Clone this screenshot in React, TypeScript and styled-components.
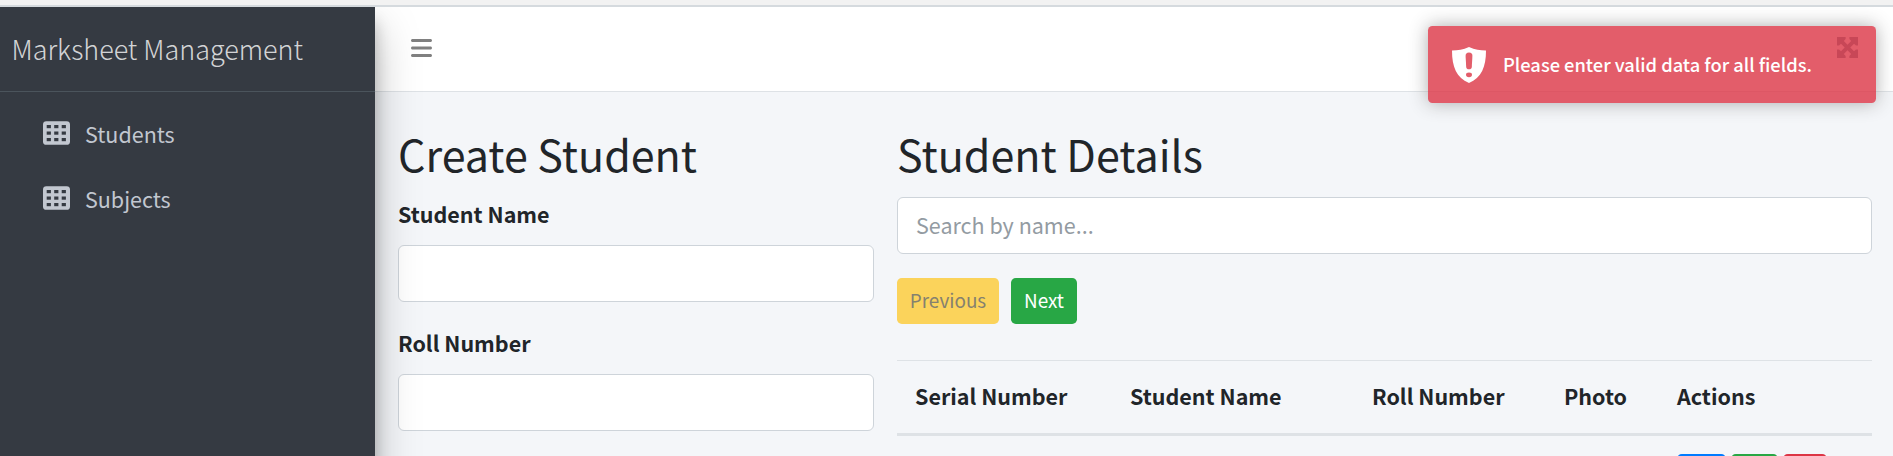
import React from "react";
import styled, { createGlobalStyle } from "styled-components";
import { FaBars } from "react-icons/fa6";

const Global = createGlobalStyle`
  * { box-sizing: border-box; }
  html, body { margin: 0; height: 456px; overflow: hidden; }
  body { background: #f4f6f9; color: #212529; font: 400 21.5px/36px "Noto Sans CJK SC", "Open Sans", sans-serif; }
`;
const Page = styled.div`
  height: 456px;
  display: flex;
  flex-direction: column;
  overflow: hidden;
  position: relative;
`;
const TopStrip = styled.div`
  height: 7px;
  flex: none;
  background: #f2f2f2;
  border-bottom: 2px solid #d5dade;
  position: relative;
  z-index: 3;
`;
const Shell = styled.div`
  display: flex;
  flex: 1;
  min-height: 0;
`;
const Sidebar = styled.aside`
  width: 375px;
  height: 900px;
  flex: none;
  background: #353a42;
  color: #c2c7d0;
  z-index: 2;
  box-shadow: 0 21px 42px rgba(0, 0, 0, 0.25), 0 15px 15px rgba(0, 0, 0, 0.22);
`;
const Brand = styled.div`
  height: 85px;
  border-bottom: 1px solid #4b545c;
  padding: 24px 0 0 11.5px;
  font-weight: 300;
  font-size: 26.95px;
  color: rgba(255, 255, 255, 0.8);
  white-space: nowrap;
`;
const Nav = styled.nav`
  padding: 11px 0 0 43px;
  display: flex;
  flex-direction: column;
  gap: 5px;
`;
const NavItem = styled.a`
  height: 60px;
  display: flex;
  align-items: center;
  gap: 15px;
  svg { margin-bottom: 1px; }
  span { padding-top: 1px; }
`;
const Main = styled.main`
  flex: 1;
  min-width: 0;
  display: flex;
  flex-direction: column;
`;
const Navbar = styled.header`
  height: 85px;
  flex: none;
  background: #fff;
  border-bottom: 1px solid #dee2e6;
  padding: 29px 0 0 36px;
  color: #808080;
  svg { display: block; width: 21px; height: 24px; }
`;
const Content = styled.div`
  display: flex;
  gap: 23px;
  padding: 36px 21px 0 23px;
`;
const FormColumn = styled.section`
  width: 476px;
  flex: none;
`;
const ListColumn = styled.section`
  flex: 1;
  min-width: 0;
`;
const Title = styled.h1`
  margin: 0 0 12px;
  font-weight: 400;
  font-size: 43px;
  line-height: 51px;
  height: 57px;
  white-space: nowrap;
`;
const Label = styled.label`
  display: block;
  font-weight: 700;
  height: 36px;
  line-height: 34px;
  margin-bottom: 12px;
`;
const Input = styled.input`
  display: block;
  width: 100%;
  height: 57px;
  border: 1px solid #ced4da;
  border-radius: 6px;
  background: #fff;
  padding: 0 18px 2px;
  font: inherit;
  color: #495057;
  &::placeholder { color: #939ba2; opacity: 1; }
`;
const Field = styled.div`
  margin-bottom: 24px;
`;
const Buttons = styled.div`
  display: flex;
  gap: 12px;
  margin: 24px 0 36px;
`;
const Button = styled.button<{ $bg: string; $fg: string; $w: number }>`
  height: 46px;
  width: ${p => p.$w}px;
  border: 0;
  border-radius: 4.8px;
  background: ${p => p.$bg};
  color: ${p => p.$fg};
  font: inherit;
  font-size: 18.9px;
  padding: 0 0 2px;
`;
const Table = styled.table`
  width: 100%;
  border-collapse: separate;
  border-spacing: 0;
  table-layout: fixed;
  th {
    height: 76px;
    text-align: left;
    padding: 0 18px 2px;
    border-top: 1px solid #dee2e6;
    border-bottom: 3px solid #dee2e6;
    font-weight: 700;
    white-space: nowrap;
  }
  td { padding: 18px; }
`;
const Actions = styled.div`
  display: flex;
  gap: 5.5px;
`;
const Toast = styled.div`
  position: absolute;
  z-index: 5;
  left: 1428px;
  top: 26px;
  width: 448px;
  height: 77px;
  border-radius: 4.5px;
  background: #dd3546;
  opacity: 0.8;
  box-shadow: 0 0 18px #999;
  display: flex;
  align-items: center;
  gap: 17px;
  color: #fff;
  font-weight: 500;
  padding-left: 24px;
`;
const ToastText = styled.span`
  font-size: 18.3px;
  padding-bottom: 1px;
  white-space: nowrap;
`;
const ToastClose = styled.span`
  position: absolute;
  top: 11px;
  right: 18px;
  color: #bb1a2e;
  svg { display: block; }
`;

const GridIcon = () => (
  <svg width="27" height="24" viewBox="0 0 27 24">
    <rect y="0.2" width="27" height="23.6" rx="3.4" fill="#c2c7d0" />
    {[0, 1, 2].map(r => [0, 1, 2].map(c => (
      <rect key={`${r}${c}`} x={3.7 + c * 7.5} y={4 + r * 6.5} width="4.2" height="3.2" fill="#353a42" />
    )))}
  </svg>
);

const ShieldIcon = () => (
  <svg width="34" height="36" viewBox="0 0 34 36">
    <path d="M0 3.5C6 3.5 11 2.8 17 0c6 2.8 11 3.5 17 3.5C34 20 29.5 30.5 17 36 4.5 30.5 0 20 0 3.5z" fill="#fff" />
    <path d="M17 5.5c2.4 0 3.5 1.5 3.4 3.5l-.6 11c-.1 1.5-1.2 2.3-2.8 2.3s-2.7-.8-2.8-2.3l-.6-11c-.1-2 1-3.5 3.4-3.5z" fill="#dd3546" />
    <ellipse cx="17" cy="27.8" rx="3" ry="2.4" fill="#dd3546" />
  </svg>
);

const ArrowsIcon = () => (
  <svg width="21" height="21" viewBox="0 0 21 21" fill="currentColor">
    <path d="M0 0h8.600v2L6.800 4l3.700 3.700L14.200 4l-1.800-2V0H21v8.600h-2L17 6.800l-3.700 3.700 3.700 3.700 2-1.800h2V21h-8.600v-2l1.800-2-3.700-3.700L6.800 17l1.800 2v2H0v-8.600h2l2 1.800 3.700-3.700L4 6.800 2 8.600H0z" />
  </svg>
);

const columns = ["Serial Number", "Student Name", "Roll Number", "Photo", "Actions"];

export default function App() {
  return (
    <>
      <Global />
      <Page>
        <TopStrip />
        <Shell>
          <Sidebar>
            <Brand>Marksheet Management</Brand>
            <Nav>
              <NavItem><GridIcon /><span>Students</span></NavItem>
              <NavItem><GridIcon /><span>Subjects</span></NavItem>
            </Nav>
          </Sidebar>
          <Main>
            <Navbar><FaBars /></Navbar>
            <Content>
              <FormColumn>
                <Title>Create Student</Title>
                <Field><Label>Student Name</Label><Input /></Field>
                <Field><Label>Roll Number</Label><Input /></Field>
              </FormColumn>
              <ListColumn>
                <Title>Student Details</Title>
                <Input placeholder="Search by name..." />
                <Buttons>
                  <Button $w={102} $bg="#fbd35b" $fg="#85816f">Previous</Button>
                  <Button $w={66} $bg="#28a745" $fg="#fff">Next</Button>
                </Buttons>
                <Table>
                  <colgroup><col width="215" /><col width="242" /><col width="192" /><col width="113" /><col /></colgroup>
                  <thead><tr>{columns.map(name => <th key={name}>{name}</th>)}</tr></thead>
                  <tbody>
                    <tr>
                      <td /><td /><td /><td />
                      <td>
                        <Actions>
                          <Button $w={48.5} $bg="#007bff" $fg="#fff" />
                          <Button $w={46.5} $bg="#28a745" $fg="#fff" />
                          <Button $w={43.5} $bg="#dc3545" $fg="#fff" />
                        </Actions>
                      </td>
                    </tr>
                  </tbody>
                </Table>
              </ListColumn>
            </Content>
          </Main>
        </Shell>
        <Toast>
          <ShieldIcon />
          <ToastText>Please enter valid data for all fields.</ToastText>
          <ToastClose><ArrowsIcon /></ToastClose>
        </Toast>
      </Page>
    </>
  );
}
